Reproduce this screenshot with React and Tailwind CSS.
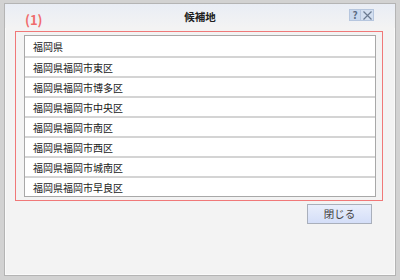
import React from "react";

const rows = [
  "福岡県",
  "福岡県福岡市東区",
  "福岡県福岡市博多区",
  "福岡県福岡市中央区",
  "福岡県福岡市南区",
  "福岡県福岡市西区",
  "福岡県福岡市城南区",
  "福岡県福岡市早良区",
];

const font = { fontFamily: '"Noto Sans CJK JP", "Noto Sans", sans-serif' };

export default function App() {
  return (
    <div className="w-[400px] h-[280px] bg-[#d2d2d2] pt-[3px] px-[4px] overflow-hidden" style={font}>
      <div className="h-[273px] border border-[#b4b4b4] bg-[#f3f3f3] flex flex-col shadow-[inset_0_0_0_1px_#fafafa]">
        <div className="relative h-[24px] bg-gradient-to-b from-[#e9edf5] to-[#f3f3f3] flex items-center justify-center">
          <span className="text-[10.5px] font-bold text-[#202020] leading-none mt-[2px]">候補地</span>
          <div className="absolute right-[21px] top-[5px] flex">
            <div className="w-[12px] h-[12px] bg-[#c9d8ee] border border-[#b6c6de] flex items-center justify-center text-[10px] font-bold text-[#5b6b82] leading-none">?</div>
            <div className="w-[13px] h-[12px] bg-[#d3dff0] border border-[#b6c6de] border-l-0 flex items-center justify-center">
              <svg width="9" height="9" viewBox="0 0 9 9">
                <path d="M0.5 0.5 L8.5 8.5 M8.5 0.5 L0.5 8.5" stroke="#6a7a90" strokeWidth="1.2" fill="none" />
              </svg>
            </div>
          </div>
        </div>
        <div className="h-[3px] relative">
          <span className="absolute left-[20px] -top-[15px] text-[13px] font-semibold text-[#f06c6c] leading-none">(1)</span>
        </div>
        <div className="ml-[10px] mr-[12px] border border-[#f07878] pt-[3px] pb-[3px] pl-[8px] pr-[6px]">
          <div className="border border-[#a8a8a8] bg-white">
            {rows.map((r, i) => (
              <div
                key={i}
                className={`h-[20px] flex items-center pl-[8px] text-[10px] text-[#1a1a1a] ${i > 0 ? "border-t-2 border-[#d4d4d4]" : ""}`}
              >
                {r}
              </div>
            ))}
          </div>
        </div>
        <div className="flex justify-end mr-[23px] mt-[3px]">
          <button className="w-[65px] h-[20px] border border-[#a9afbb] bg-gradient-to-b from-[#e9eefb] to-[#d4def8] text-[10.5px] text-[#404040] flex items-center justify-center leading-none">
            閉じる
          </button>
        </div>
      </div>
    </div>
  );
}
